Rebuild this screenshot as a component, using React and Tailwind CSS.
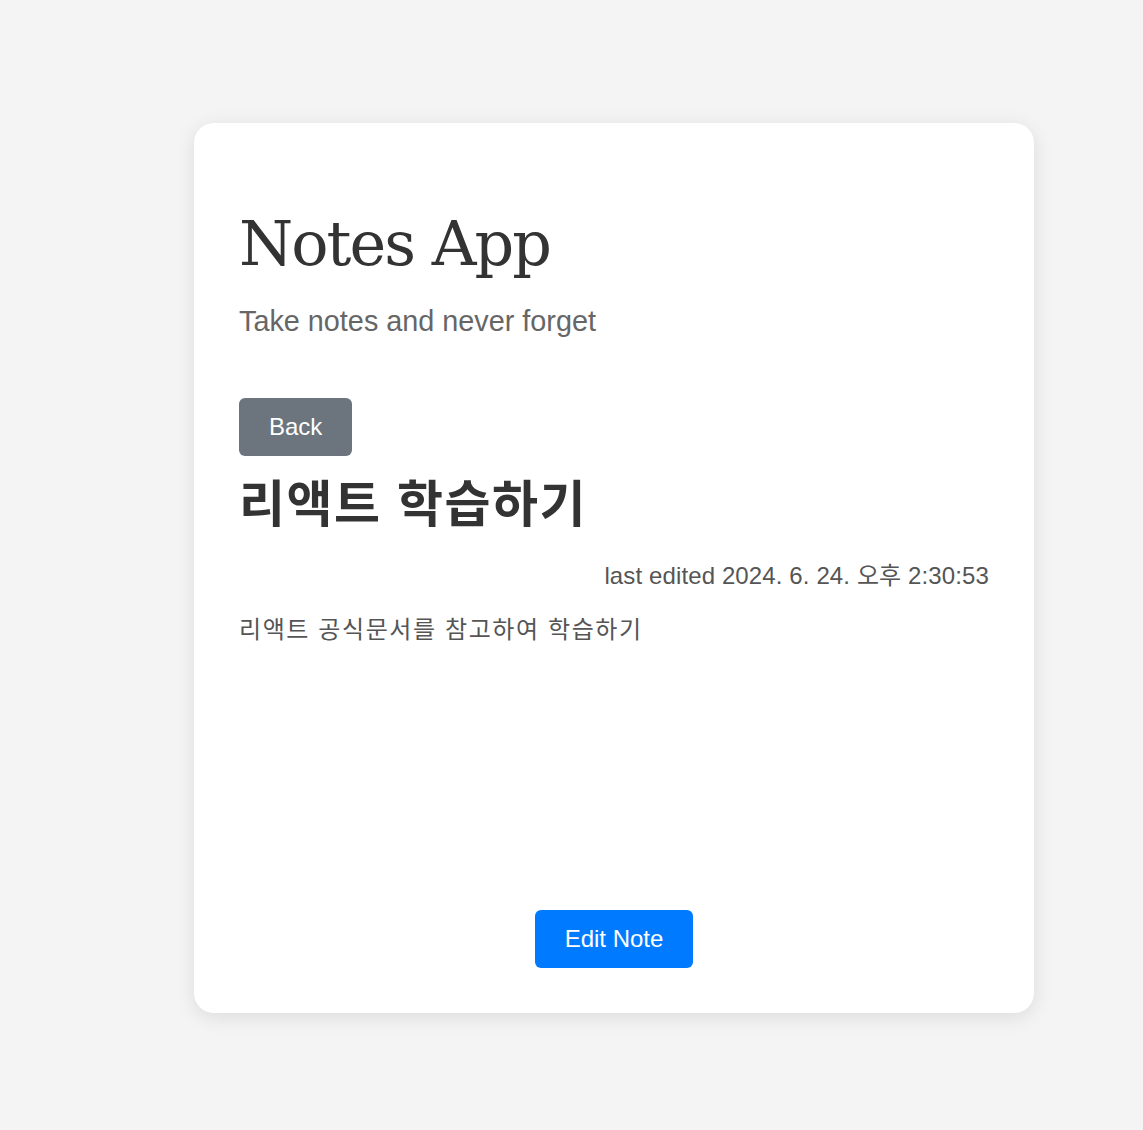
export default function App() {
  const sans = "font-['Liberation_Sans','Noto_Sans_CJK_KR',Arial,sans-serif]";
  return (
    <div className="min-h-[1130px] w-full bg-[#f4f4f4] pl-[194px] pt-[123px]">
      <div
        className={`flex h-[890px] w-[840px] flex-col rounded-[20px] bg-white p-[45px] shadow-[0_4px_20px_rgba(0,0,0,0.1)] ${sans}`}
      >
        <h1 className="mt-[45px] font-['DejaVu_Serif','Liberation_Serif',serif] text-[62px] leading-[62px] tracking-[-2px] font-normal text-[#333]">
          Notes App
        </h1>
        <p className="mt-[32px] text-[28.8px] leading-[28px] text-[#666]">
          Take notes and never forget
        </p>
        <div className="mt-[63px]">
          <button className="flex h-[58px] items-center rounded-[6px] bg-[#6c757d] px-[30px] text-[24px] leading-[28px] text-white">
            Back
          </button>
        </div>
        <h2 className="mt-[24px] text-[50px] leading-[50px] tracking-[1.5px] font-bold text-[#333]">
          리액트 학습하기
        </h2>
        <div className="mt-[34px] text-right text-[24px] leading-[24px] tracking-[0.12px] text-[#555]">
          last edited 2024. 6. 24. 오후 2:30:53
        </div>
        <p className="mt-[30px] text-[24px] leading-[24px] tracking-[1.6px] text-[#555]">
          리액트 공식문서를 참고하여 학습하기
        </p>
        <div className="mt-auto flex justify-center">
          <button className="flex h-[58px] items-center rounded-[6px] bg-[#007bff] px-[30px] text-[24px] leading-[28px] text-white">
            Edit Note
          </button>
        </div>
      </div>
    </div>
  );
}
